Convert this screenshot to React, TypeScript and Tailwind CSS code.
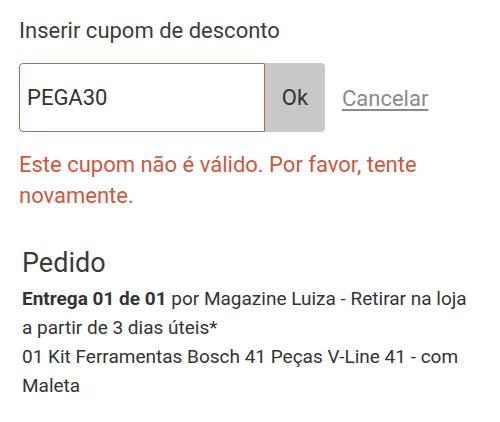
export default function App() {
  return (
    <div
      className="w-[500px] h-[422px] bg-white overflow-hidden"
      style={{ fontFamily: "Roboto, 'Noto Sans', sans-serif" }}
    >
      <section className="pl-[19px] pt-[17px]">
        <h2 className="text-[22px] leading-[28px] text-[#3c3c3c]">Inserir cupom de desconto</h2>

        <div className="mt-[18px] flex items-center">
          <div className="flex h-[69px]">
            <div className="w-[246px] h-full border border-[#c9624c] rounded-l-[4px] flex items-center pl-[7px] text-[22px] text-[#333333]">
              PEGA30
            </div>
            <button className="w-[60px] h-full bg-[#c8c8c8] rounded-r-[4px] text-[22px] text-[#333333] flex items-center justify-center">
              Ok
            </button>
          </div>
          <a className="ml-[17px] mt-[2px] text-[22px] text-[#8a8a8a] underline underline-offset-[3px]">Cancelar</a>
        </div>

        <p className="mt-[17px] w-[450px] text-[22px] leading-[31px] text-[#d0563e]">
          Este cupom não é válido. Por favor, tente novamente.
        </p>
      </section>

      <section className="pl-[22px] pt-[36px] text-[#333333]">
        <h3 className="text-[27px] leading-[32px] text-[#3a3a3a]">Pedido</h3>
        <p className="mt-[5px] w-[455px] text-[19px] leading-[29px]">
          <strong className="font-bold">Entrega 01 de 01</strong> por Magazine Luiza - Retirar na loja a partir de 3 dias úteis*
        </p>
        <p className="w-[455px] text-[19px] leading-[29px]">
          01 Kit Ferramentas Bosch 41 Peças V-Line 41 - com Maleta
        </p>
      </section>
    </div>
  );
}
